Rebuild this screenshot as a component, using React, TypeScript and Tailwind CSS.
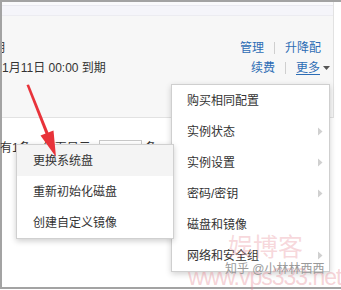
import React from "react";

const font = { fontFamily: '"Liberation Sans","Noto Sans CJK SC",sans-serif' };

function Caret({ className }: { className: string }) {
  return (
    <svg width="6" height="9" viewBox="0 0 6 9" className={className}>
      <path d="M1 0.5 L5.5 4.5 L1 8.5 Z" fill="#d0d0d0" />
    </svg>
  );
}

const rightItems: { label: string; sub?: boolean }[] = [
  { label: "购买相同配置" },
  { label: "实例状态", sub: true },
  { label: "实例设置", sub: true },
  { label: "密码/密钥", sub: true },
  { label: "磁盘和镜像" },
  { label: "网络和安全组", sub: true },
];

const leftItems = ["更换系统盘", "重新初始化磁盘", "创建自定义镜像"];

export default function App() {
  return (
    <div className="relative w-[341px] h-[290px] overflow-hidden bg-white text-[12px] text-[#333]" style={font}>
      {/* === Frame === */}
      <div className="h-[289px] border-t-2 border-l-2 border-b-2 border-[#a3a3a3]">
        {/* === Top panel === */}
        <div className="w-[332px] h-[116px] overflow-hidden bg-[#f7f7f7] border-r border-b border-[#e2e2e2]">
          <div className="h-[4px] bg-[#fafafc] border-b border-[#e9e9f0]" />
          <div className="h-[10px] bg-[#f5f5fa] border-b border-[#ececf1]" />
          <div className="flex justify-between pt-[22px]">
            <div className="leading-[20px]">
              <div className="-ml-[21px] whitespace-nowrap">到期</div>
              <div className="whitespace-nowrap">1月11日 00:00 到期</div>
            </div>
            <div className="flex flex-col items-end leading-[20px] pr-[3px] text-[#2d6db5]">
              <div className="flex items-center mr-[9px]">
                <span>管理</span>
                <span className="mx-[10px] h-[12px] w-px bg-[#cfcfcf]" />
                <span>升降配</span>
              </div>
              <div className="flex items-center">
                <span>续费</span>
                <span className="mx-[10px] h-[12px] w-px bg-[#cfcfcf]" />
                <span className="underline underline-offset-2">更多</span>
                <svg width="7" height="4" viewBox="0 0 7 4" className="ml-[3px]">
                  <path d="M0 0 H7 L3.5 4 Z" fill="#555" />
                </svg>
              </div>
            </div>
          </div>
        </div>

        {/* === Pager row === */}
        <div className="flex items-start pt-[22px] whitespace-nowrap leading-[16px]">
          <span className="-ml-[2px]">有1条，每页显示</span>
          <div className="ml-[8px] w-[43px] h-[24px] border border-[#c8c8c8] bg-white px-[8px] leading-[22px]">20</div>
          <span className="ml-[3px]">条</span>
        </div>
      </div>

      {/* === Right dropdown === */}
      <div className="absolute left-[171px] top-[84px] w-[159px] bg-white border border-[#cfcfcf] shadow-[0_2px_6px_rgba(0,0,0,0.18)]">
        {rightItems.map((it) => (
          <div key={it.label} className="relative flex items-center h-[31px] pl-[15px]">
            <span>{it.label}</span>
            {it.sub && <Caret className="absolute right-[6px] top-[11px]" />}
          </div>
        ))}
      </div>

      {/* === Left submenu === */}
      <div className="absolute left-[16px] top-[144px] w-[158px] bg-white border border-[#d0d0d0] shadow-[0_2px_6px_rgba(0,0,0,0.2)]">
        {leftItems.map((t, i) => (
          <div key={t} className={`flex items-center h-[31px] pl-[16px] ${i === 0 ? "bg-[#f4f4f4]" : ""}`}>
            {t}
          </div>
        ))}
      </div>

      {/* === Watermark === */}
      <div className="absolute left-[228px] top-[232px] text-[25px] leading-[30px] text-[#e88f9a]/35 pointer-events-none">娱博客</div>
      <div
        className="absolute left-[188px] top-[263px] text-[23px] leading-[28px] tracking-[-1px] text-[#e88f9a]/40 pointer-events-none"
        style={{ fontFamily: '"Liberation Sans",sans-serif' }}
      >
        www.vps333.net
      </div>
      <div className="absolute left-[225px] top-[261px] text-[12px] leading-[16px] text-[#9a9a9a] pointer-events-none">知乎 @小林林西西</div>

      {/* === Red arrow === */}
      <svg width="80" height="170" viewBox="0 0 80 170" className="absolute left-0 top-0 pointer-events-none">
        <path d="M26.5 85 L29 84.5 L49 134 L46 135 Z" fill="#e8333a" />
        <path d="M56 157 L40.5 135.5 L53.5 130.5 Z" fill="#e8333a" />
      </svg>
    </div>
  );
}
